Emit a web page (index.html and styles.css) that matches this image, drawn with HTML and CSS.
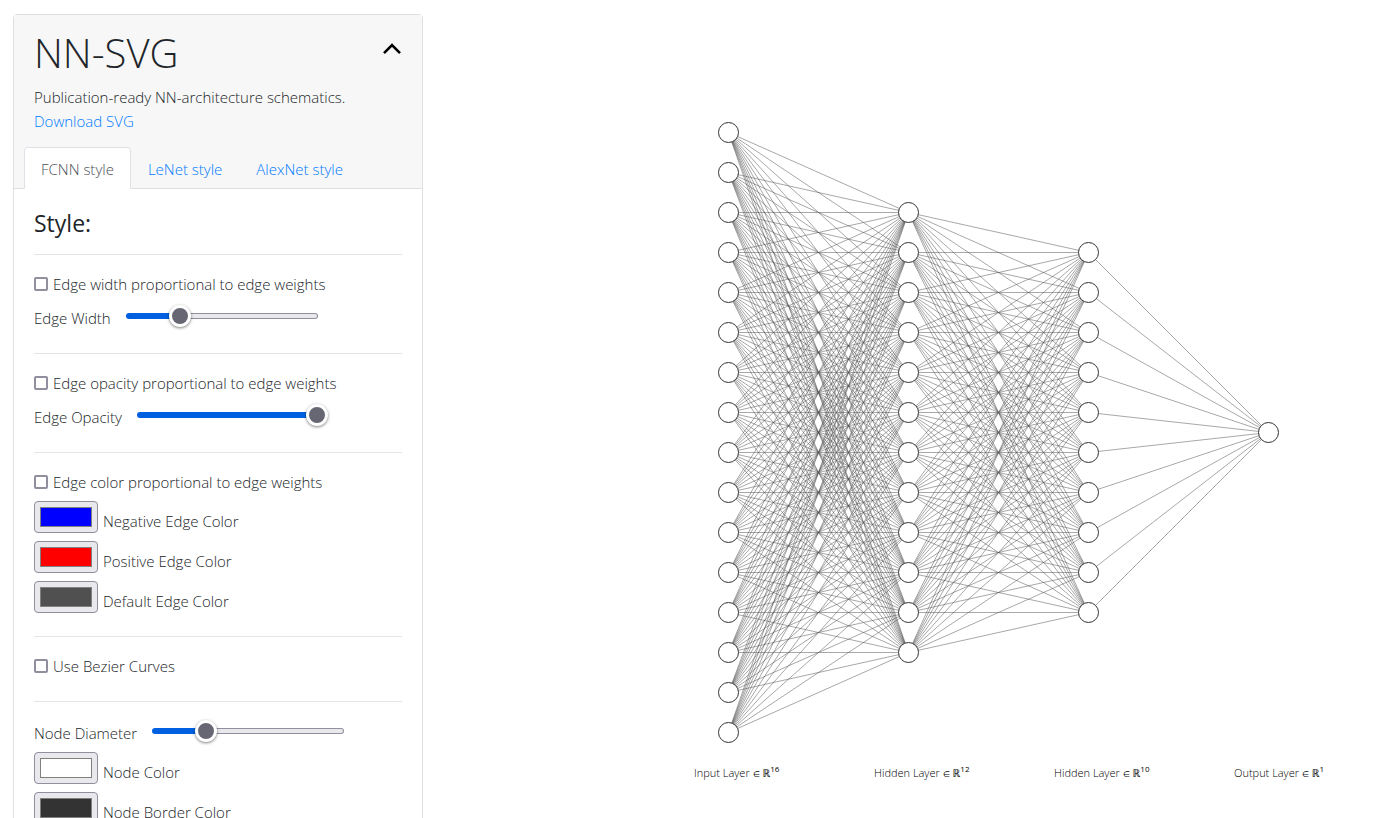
FILE: index.html
```html
<!DOCTYPE html>
<html lang="en">
<head>
<meta charset="utf-8">
<title>NN-SVG</title>
<link rel="stylesheet" href="styles.css">
</head>
<body>
<main class="page">
  <section class="card">
    <header class="card-header">
      <div class="title-row">
        <h1 class="title">NN-SVG</h1>
        <button class="collapse" type="button" aria-label="Collapse">
          <svg class="chevron" width="20" height="12" viewBox="0 0 20 12" aria-hidden="true"><path d="M2 10.2 L10 2.2 L18 10.2" fill="none" stroke="#000" stroke-width="2.6"/></svg>
        </button>
      </div>
      <p class="lead">Publication-ready NN-architecture schematics.</p>
      <a class="download" href="#">Download SVG</a>
      <nav class="tabs">
        <a class="tab tab-active" href="#">FCNN style</a>
        <a class="tab" href="#">LeNet style</a>
        <a class="tab" href="#">AlexNet style</a>
      </nav>
    </header>
    <form class="card-body">
      <h2 class="section-title">Style:</h2>
      <div class="group">
        <div class="row"><input class="check" type="checkbox" id="w-prop"><label for="w-prop">Edge width proportional to edge weights</label></div>
        <div class="row row-range"><label for="w">Edge Width</label><input class="range" type="range" id="w" value="25"></div>
      </div>
      <div class="group">
        <div class="row"><input class="check" type="checkbox" id="o-prop"><label for="o-prop">Edge opacity proportional to edge weights</label></div>
        <div class="row row-range"><label for="o">Edge Opacity</label><input class="range range-full" type="range" id="o" value="100"></div>
      </div>
      <div class="group">
        <div class="row"><input class="check" type="checkbox" id="c-prop"><label for="c-prop">Edge color proportional to edge weights</label></div>
        <div class="swatches">
          <div class="row row-color"><input class="color" type="color" id="neg" value="#0000ff"><label for="neg">Negative Edge Color</label></div>
          <div class="row row-color"><input class="color" type="color" id="pos" value="#ff0000"><label for="pos">Positive Edge Color</label></div>
          <div class="row row-color"><input class="color" type="color" id="def" value="#505050"><label for="def">Default Edge Color</label></div>
        </div>
      </div>
      <div class="group">
        <div class="row"><input class="check" type="checkbox" id="bez"><label for="bez">Use Bezier Curves</label></div>
      </div>
      <div class="group">
        <div class="row row-range"><label for="d">Node Diameter</label><input class="range" type="range" id="d" value="25"></div>
        <div class="swatches">
          <div class="row row-color"><input class="color" type="color" id="node" value="#ffffff"><label for="node">Node Color</label></div>
          <div class="row row-color"><input class="color" type="color" id="border" value="#333333"><label for="border">Node Border Color</label></div>
        </div>
      </div>
    </form>
  </section>
  <svg class="graph" id="graph" viewBox="423 0 964 818" role="img" aria-label="Fully connected network"></svg>
</main>
<script src="graph.js"></script>
</body>
</html>
```
FILE: styles.css
```css
* { box-sizing: border-box; }
body {
  margin: 0;
  background: #fff;
  color: #212529;
  font: 300 15px/24px "Open Sans", "Noto Sans", sans-serif;
}
.page { display: flex; height: 100vh; overflow: hidden; }
.card {
  flex: 0 1 410px;
  align-self: flex-start;
  min-height: 100vh;
  margin: 14px 0 0 13px;
  border: 1px solid #dfdfdf;
  border-radius: 4px;
}
.card-header {
  padding: 14px 20px 0;
  background: #f7f7f7;
  border-bottom: 1px solid #dfdfdf;
}
.title-row { display: flex; justify-content: space-between; align-items: center; }
.title { margin: 0 0 8px; font-size: 40px; line-height: 48px; font-weight: 300; }
.collapse { padding: 0 0 16px; border: 0; background: none; display: flex; }
.lead { margin: 0; }
a { color: #007bff; text-decoration: none; }
.download { display: block; }
.tabs { display: flex; margin: 14px -10px -1px; }
.tab { padding: 9px 16px 7px; border: 1px solid transparent; border-radius: 4px 4px 0 0; }
.tab-active { color: #495057; background: #fff; border-color: #dee2e6 #dee2e6 #fff; }
.card-body { padding: 20px; }
.section-title { margin: 0 0 16px; font-size: 23px; line-height: 29px; font-weight: 400; }
.group {
  display: grid;
  gap: 6px;
  padding: 16px 0 6px;
  margin-bottom: 16px;
  border-top: 1px solid #e5e5e5;
}
.row { display: flex; align-items: center; gap: 5px; min-height: 26px; }
.row-range { gap: 15px; margin-bottom: 2px; }
.row-range label { padding-top: 4px; line-height: 22px; }
.swatches { display: grid; gap: 8px; padding-bottom: 1px; }
.row-color label { padding-top: 8px; }
.check {
  appearance: none;
  width: 14px;
  height: 14px;
  margin: 0;
  border: 2px solid #8f8f9d;
  border-radius: 2px;
  background: #fff;
}
.check:checked { background: #0060df; }
.color {
  appearance: none;
  width: 64px;
  height: 32px;
  padding: 5px;
  border: 1px solid #8f8f9d;
  border-radius: 4px;
  background: #e9e9ed;
}
.color::-webkit-color-swatch-wrapper { padding: 0; }
.color::-webkit-color-swatch { border: 1px solid #808080; border-radius: 0; }
.range { appearance: none; width: 192px; height: 22px; margin: 0; background: none; }
.range::-webkit-slider-runnable-track {
  height: 6px;
  border: 1px solid transparent;
  border-radius: 3px;
  background:
    linear-gradient(to right, #0060df 52px, transparent 52px) border-box,
    linear-gradient(#e9e9ed, #e9e9ed) padding-box,
    linear-gradient(#8f8f9d, #8f8f9d) border-box;
}
.range::-webkit-slider-thumb {
  appearance: none;
  width: 22px;
  height: 22px;
  margin-top: -9px;
  border: 3px solid #fff;
  border-radius: 50%;
  background: #676774;
  box-shadow: 0 1px 3px rgba(0, 0, 0, 0.5);
}
.range-full::-webkit-slider-runnable-track {
  background: linear-gradient(to right, #0060df 182px, transparent 182px) border-box;
}
.graph { flex: 1 1 0; min-width: 0; height: 100vh; }
.edge { stroke: #505050; stroke-width: 0.5; }
.node { fill: #fff; stroke: #333; stroke-width: 1; }
.layer-label { font-size: 11px; fill: #000; }
.member { font-size: 8px; font-weight: 400; }
.exponent { font-size: 8px; font-weight: 400; }
```
FILE: graph.js
```js
const NS = "http://www.w3.org/2000/svg";
const svg = document.getElementById("graph");
const layers = [16, 12, 10, 1];
const spacing = 40;
const layerGap = 180;
const left = 728.5;
const middle = 432.5;

function add(name, attrs, parent = svg) {
  const el = document.createElementNS(NS, name);
  for (const key in attrs) el.setAttribute(key, attrs[key]);
  parent.appendChild(el);
  return el;
}

const nodes = layers.map((count, i) =>
  Array.from({ length: count }, (_, j) => ({
    x: left + i * layerGap,
    y: middle + (j - (count - 1) / 2) * spacing
  }))
);

for (let i = 0; i + 1 < nodes.length; i++)
  for (const a of nodes[i])
    for (const b of nodes[i + 1])
      add("line", { class: "edge", x1: a.x, y1: a.y, x2: b.x, y2: b.y });

for (const n of nodes.flat()) add("circle", { class: "node", cx: n.x, cy: n.y, r: 10 });

layers.forEach((count, i) => {
  const kind = i === 0 ? "Input" : i === layers.length - 1 ? "Output" : "Hidden";
  const text = add("text", { class: "layer-label", x: 694 + i * layerGap, y: 777 });
  text.textContent = kind + " Layer ";
  add("tspan", { class: "member" }, text).textContent = "∈";
  add("tspan", {}, text).textContent = " ℝ";
  add("tspan", { class: "exponent", dy: -5 }, text).textContent = count;
});
```
